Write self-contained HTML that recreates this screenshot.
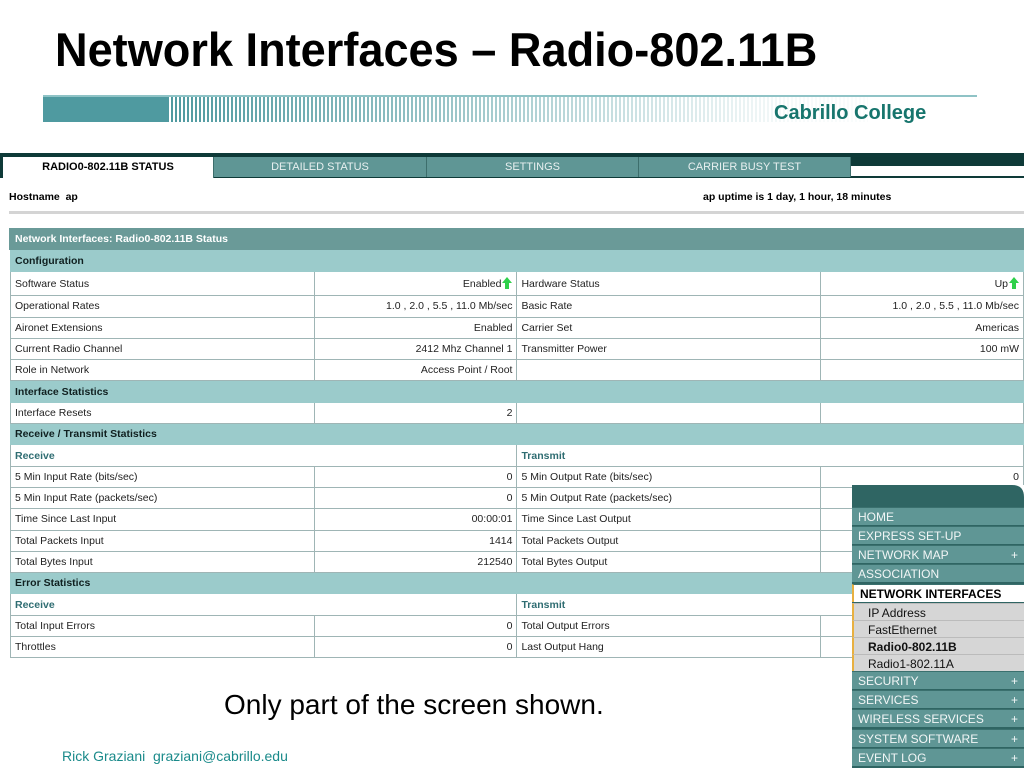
<!DOCTYPE html>
<html><head><meta charset="utf-8"><style>
*{margin:0;padding:0;box-sizing:border-box}
body{width:1024px;height:768px;position:relative;overflow:hidden;background:#fff;font-family:"Liberation Sans",sans-serif}
.abs{position:absolute}
h1{position:absolute;left:55px;top:22px;font-size:47px;font-weight:bold;color:#000;white-space:nowrap;transform:scaleX(0.96);transform-origin:left}
.ban{left:43px;top:95px;width:934px;height:30px}
.tabs{left:0;top:153px;width:1024px;height:25px;background:#0e3a38}
.tab{position:absolute;top:4px;height:20px;font-size:11px;color:#e8f0f0;text-align:center;line-height:20px;background:#5f9695;border-right:1px solid #3d6e6c}
table{position:absolute;left:10px;top:228px;width:1014px;border-collapse:collapse;font-size:10.5px;color:#222}
td{border:1px solid #9fb5b5;padding:0 4px;height:21.3px;white-space:nowrap}
tr.sec td{background:#9bcbcb;font-weight:bold;color:#102020;border-color:#9bcbcb}
tr.sub td{color:#2f6d72;font-weight:bold}
td.r{text-align:right}
.arr{display:inline-block;width:10px;height:12px;vertical-align:-2px;margin-left:1px}
.side{left:852px;top:485px;width:172px;height:283px;background:#2f6563}
.mi{position:absolute;left:852px;width:172px;height:18px;font-size:12px;line-height:18px;padding-left:6px;color:#f2f6f6;background:#5f9695;border-top:1px solid #3a706e}
.mi b{position:absolute;right:6px;font-weight:normal}
.si{background:#d6d6d6;color:#111;padding-left:14px;border-top:1px solid #bbb}
</style></head><body>
<h1>Network Interfaces – Radio-802.11B</h1>
<svg class="abs ban" viewBox="0 0 934 30">
<defs><linearGradient id="fd" x1="0" x2="1"><stop offset="0" stop-color="#fff" stop-opacity="0"/><stop offset="0.14" stop-color="#fff" stop-opacity="0"/><stop offset="0.8" stop-color="#fff" stop-opacity="0.95"/><stop offset="1" stop-color="#fff"/></linearGradient>
<pattern id="st" width="4" height="27" patternUnits="userSpaceOnUse"><rect width="2" height="27" fill="#4f9aa0"/></pattern></defs>
<rect x="0" y="0" width="934" height="2" fill="#8fc3c6"/>
<rect x="0" y="2" width="125" height="25" fill="#4f9aa0"/>
<rect x="125" y="2" width="700" height="25" fill="url(#st)"/>
<rect x="0" y="2" width="934" height="25" fill="url(#fd)"/>
<text x="731" y="24" font-family="Liberation Sans" font-weight="bold" font-size="20" fill="#17756d">Cabrillo College</text>
</svg>
<div class="abs tabs">
<div class="tab" style="left:3px;width:211px;background:#fff;color:#000;font-weight:bold;height:21px">RADIO0-802.11B STATUS</div>
<div class="tab" style="left:214px;width:213px">DETAILED STATUS</div>
<div class="tab" style="left:427px;width:212px">SETTINGS</div>
<div class="tab" style="left:639px;width:212px">CARRIER BUSY TEST</div>
<div class="abs" style="left:851px;top:13px;width:173px;height:10px;background:#fff"></div>
</div>
<div class="abs" style="left:9px;top:191px;font-size:10.5px;font-weight:bold">Hostname&nbsp; ap</div>
<div class="abs" style="left:703px;top:191px;font-size:10.5px;font-weight:bold">ap uptime is 1 day, 1 hour, 18 minutes</div>
<div class="abs" style="left:9px;top:211px;width:1015px;height:3px;background:#d4d4d4"></div>
<div class="abs" style="left:9px;top:228px;width:1015px;height:22px;background:#6a9a98;color:#fff;font-size:10.5px;font-weight:bold;line-height:22px;padding-left:6px">Network Interfaces: Radio0-802.11B Status</div>
<table style="top:250px">
<colgroup><col style="width:304px"><col style="width:203px"><col style="width:304px"><col style="width:203px"></colgroup>
<tr class="sec"><td colspan="4">Configuration</td></tr>
<tr style="height:24px"><td>Software Status</td><td class="r">Enabled<svg class="arr" viewBox="0 0 10 12"><path d="M5 0L10 6H7V12H3V6H0Z" fill="#2fd04a"/></svg></td><td>Hardware Status</td><td class="r">Up<svg class="arr" viewBox="0 0 10 12"><path d="M5 0L10 6H7V12H3V6H0Z" fill="#2fd04a"/></svg></td></tr>
<tr><td>Operational Rates</td><td class="r">1.0 , 2.0 , 5.5 , 11.0 Mb/sec</td><td>Basic Rate</td><td class="r">1.0 , 2.0 , 5.5 , 11.0 Mb/sec</td></tr>
<tr><td>Aironet Extensions</td><td class="r">Enabled</td><td>Carrier Set</td><td class="r">Americas</td></tr>
<tr><td>Current Radio Channel</td><td class="r">2412 Mhz Channel 1</td><td>Transmitter Power</td><td class="r">100 mW</td></tr>
<tr><td>Role in Network</td><td class="r">Access Point / Root</td><td></td><td></td></tr>
<tr class="sec"><td colspan="4">Interface Statistics</td></tr>
<tr><td>Interface Resets</td><td class="r">2</td><td></td><td></td></tr>
<tr class="sec"><td colspan="4">Receive / Transmit Statistics</td></tr>
<tr class="sub"><td colspan="2">Receive</td><td colspan="2">Transmit</td></tr>
<tr><td>5 Min Input Rate (bits/sec)</td><td class="r">0</td><td>5 Min Output Rate (bits/sec)</td><td class="r">0</td></tr>
<tr><td>5 Min Input Rate (packets/sec)</td><td class="r">0</td><td>5 Min Output Rate (packets/sec)</td><td class="r">0</td></tr>
<tr><td>Time Since Last Input</td><td class="r">00:00:01</td><td>Time Since Last Output</td><td></td></tr>
<tr><td>Total Packets Input</td><td class="r">1414</td><td>Total Packets Output</td><td></td></tr>
<tr><td>Total Bytes Input</td><td class="r">212540</td><td>Total Bytes Output</td><td></td></tr>
<tr class="sec"><td colspan="4">Error Statistics</td></tr>
<tr class="sub"><td colspan="2">Receive</td><td colspan="2">Transmit</td></tr>
<tr><td>Total Input Errors</td><td class="r">0</td><td>Total Output Errors</td><td></td></tr>
<tr><td>Throttles</td><td class="r">0</td><td>Last Output Hang</td><td></td></tr>
</table>
<div class="abs side"></div>
<svg class="abs" style="left:1012px;top:485px" width="12" height="12"><path d="M0 0H12V12Q12 0 0 0Z" fill="#fff"/></svg>
<div class="mi" style="top:507px">HOME</div>
<div class="mi" style="top:526px">EXPRESS SET-UP</div>
<div class="mi" style="top:545px">NETWORK MAP<b>+</b></div>
<div class="mi" style="top:564px">ASSOCIATION</div>
<div class="mi" style="top:584px;background:#fff;color:#000;font-weight:bold;border-left:2px solid #e8b040">NETWORK INTERFACES</div>
<div class="mi si" style="top:603px;border-left:2px solid #e8b040">IP Address</div>
<div class="mi si" style="top:620px;border-left:2px solid #e8b040">FastEthernet</div>
<div class="mi si" style="top:637px;font-weight:bold;border-left:2px solid #e8b040">Radio0-802.11B</div>
<div class="mi si" style="top:654px;border-left:2px solid #e8b040">Radio1-802.11A</div>
<div class="mi" style="top:671px">SECURITY<b>+</b></div>
<div class="mi" style="top:690px">SERVICES<b>+</b></div>
<div class="mi" style="top:709px">WIRELESS SERVICES<b>+</b></div>
<div class="mi" style="top:729px">SYSTEM SOFTWARE<b>+</b></div>
<div class="mi" style="top:748px">EVENT LOG<b>+</b></div>
<div class="abs" style="left:224px;top:689px;font-size:28px;color:#000;white-space:nowrap">Only part of the screen shown.</div>
<div class="abs" style="left:62px;top:748px;font-size:14px;color:#1a8a8a;white-space:nowrap">Rick Graziani&nbsp; graziani@cabrillo.edu</div>
</body></html>
